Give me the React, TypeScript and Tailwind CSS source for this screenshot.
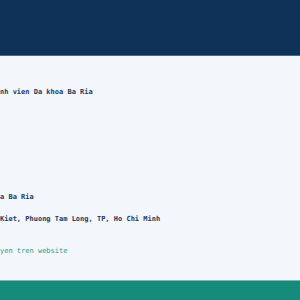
import React from "react";

const mono = { fontFamily: '"DejaVu Sans Mono", "Liberation Mono", monospace' };

export default function App() {
  return (
    <div className="flex h-[300px] w-[300px] flex-col overflow-hidden bg-[#f3f6fb]" style={mono}>
      {/* Header */}
      <header className="h-[56px] shrink-0 border-b border-[#47698f] bg-[#0f3358]" />

      {/* Content */}
      <main className="flex flex-1 flex-col whitespace-nowrap text-[7px] font-bold leading-[12px] text-[#1b3a5e]">
        <p className="mt-[30px]">nh vien Da khoa Ba Ria</p>
        <p className="mt-[93px]">a Ba Ria</p>
        <p className="mt-[10px]">Kiet, Phuong Tam Long, TP, Ho Chi Minh</p>
        <p className="mt-[20px] font-normal text-[#2a9d8c]">yen tren website</p>
      </main>

      {/* Footer */}
      <footer className="h-[20px] shrink-0 border-t border-[#7fb8ae] bg-[#168a7b]" />
    </div>
  );
}
